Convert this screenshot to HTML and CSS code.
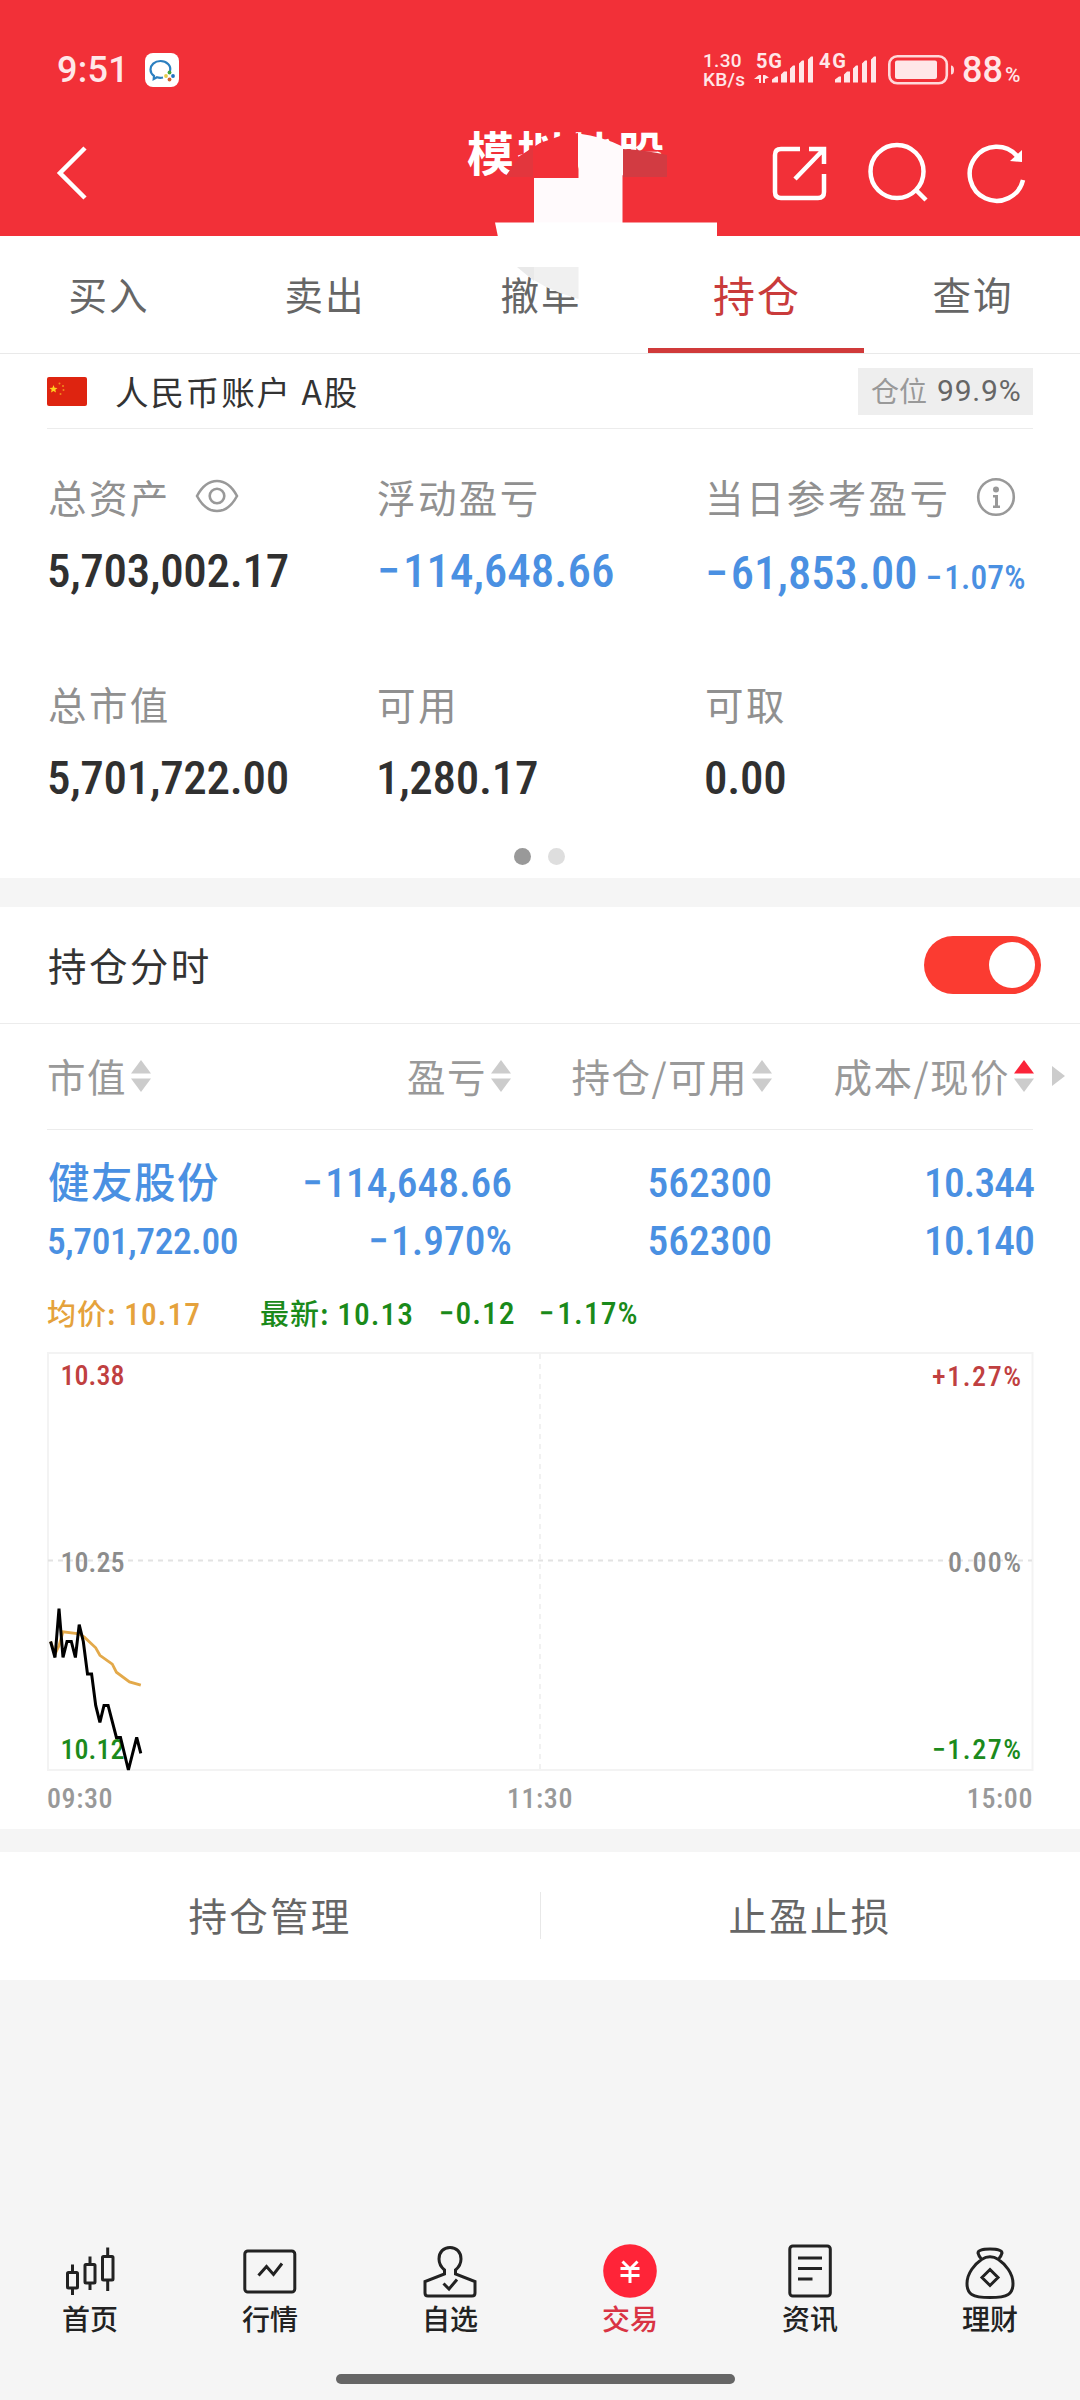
FILE: index.html
```
<!DOCTYPE html>
<html lang="zh-CN">
<head>
<meta charset="utf-8">
<title>模拟炒股</title>
<link rel="stylesheet" href="styles.css">
</head>
<body>
<div class="app">
  <header class="top">
    <div class="status">
      <span class="clock">9:51</span>
      <svg class="wecom" width="34" height="34" viewBox="0 0 34 34">
        <rect width="34" height="34" rx="8" fill="#fff"/>
        <path d="M25 18c1.500-5.500-3.500-10-9.500-10S5.500 12 5.500 16.500c0 3 1.500 5 3.500 6.500l-.3 3 3.300-1.700c2 .6 4 .6 6 .2" fill="none" stroke="#2b7fc0" stroke-width="2.200"/>
        <circle cx="24.500" cy="19.500" r="1.900" fill="#3fa43c"/><circle cx="28" cy="23" r="1.900" fill="#2272c3"/><circle cx="24.500" cy="26.500" r="1.900" fill="#d0652f"/><circle cx="21" cy="23" r="1.900" fill="#e6cc4c"/>
      </svg>
      <span class="speed"><span>1.30</span><span>KB/s</span></span>
      <svg class="signals" width="121" height="30" viewBox="0 0 121 30">
        <text class="gen" x="1" y="14.500" textLength="26">5G</text>
        <text class="gen" x="64" y="14.500" textLength="27">4G</text>
        <g fill="#ffe7e8">
          <path d="M4 22l-5 4h5v4h2v-8zM8 22v8h2v-4l4-1.500-4-2.500z"/>
          <path d="M17 29.500v-3l4-3h2v6zM26 29.500v-8l3-3h3v11zM35 29.500v-14l3-3h2v17zM44 29.500v-19l3-3h2v22zM53 29.500v-23l3-3h2v26z"/>
          <path d="M80 29.500v-3l4-3h2v6zM89 29.500v-8l3-3h3v11zM98 29.500v-14l3-3h2v17zM107 29.500v-19l3-3h2v22zM116 29.500v-23l3-3h2v26z"/>
        </g>
      </svg>
      <svg class="battery" width="67" height="30" viewBox="0 0 67 30">
        <rect x="1.300" y="1.300" width="57.500" height="27" rx="8" fill="none" stroke="#ffd9da" stroke-width="2.600"/>
        <rect x="7" y="5.500" width="42" height="18.500" rx="2" fill="#ffe7e8"/>
        <path d="M63 10.500q3 0 3 4.500t-3 4.500z" fill="#ffd9da"/>
      </svg>
      <span class="level">88<small>%</small></span>
    </div>
    <div class="titlebar">
      <svg class="back" width="40" height="60" viewBox="0 0 40 60"><path d="M34 5L9 30l25 25" fill="none" stroke="#fff" stroke-width="4.500"/></svg>
      <h1>模拟炒股</h1>
      <div class="actions">
        <svg width="60" height="60" viewBox="0 0 60 60" fill="none" stroke="#fff" stroke-width="4.500">
          <path d="M30 6H11q-6 0-6 6v37q0 6 6 6h37q6 0 6-6V31M39 6h15v15M54 6L25 36"/></svg>
        <svg width="60" height="60" viewBox="0 0 60 60" fill="none" stroke="#fff" stroke-width="4.500">
          <circle cx="29" cy="28.500" r="26.500"/><path d="M47 46l11 11"/></svg>
        <svg width="60" height="60" viewBox="0 0 60 60">
          <path d="M57 37A27 27 0 1 1 51 13" fill="none" stroke="#fff" stroke-width="4.500"/><path d="M56 7v12l-12-1z" fill="#fff"/></svg>
      </div>
    </div>
    <svg class="cover" width="230" height="180" viewBox="490 125 230 180">
      <path d="M514 177V162L518 157 540 143 560 136 578 133V178H514z" fill="#f23038"/>
      <path d="M505 177L518 159 533 147V177z" fill="#e3363d"/>
      <path d="M623 149q22 1 44 6v22h-44z" fill="#d23b42"/>
      <path d="M578.500 133.500q24 3 44 13V223H534v-45h44.500z" fill="#fffafc"/>
      <path d="M495 222.500h222V237H498z" fill="#fff"/>
      <path d="M517 267h17v14z" fill="#e9e9e9"/>
      <path d="M534 267h44.500v32L560 293 546 287 534 280z" fill="#f0f0f0"/>
    </svg>
  </header>

  <nav class="tabs">
    <a>买入</a><a>卖出</a><a>撤单</a><a class="on">持仓</a><a>查询</a>
  </nav>

  <section class="account">
    <div class="acct-row">
      <svg width="40" height="29" viewBox="0 0 40 29"><rect width="40" height="29" rx="2" fill="#de2410"/>
        <path d="M6.500 8l1.100 2.700 2.900.2-2.200 1.900.7 2.800-2.500-1.500-2.500 1.500.7-2.800-2.200-1.900 2.900-.2z" fill="#ffd21e"/>
        <g fill="#f08a1c"><circle cx="12.500" cy="6.500" r="1"/><circle cx="16" cy="9" r="1"/><circle cx="16.500" cy="13" r="1"/><circle cx="13.500" cy="17" r="1"/></g></svg>
      <span class="acct-name">人民币账户 A股</span>
      <span class="ratio">仓位 <b>99.9%</b></span>
    </div>
    <div class="metrics">
      <div class="metric">
        <div class="label">总资产
          <svg class="eye" width="44" height="34" viewBox="0 0 44 34" fill="none" stroke="#999" stroke-width="2.600"><path d="M2 17Q10 2 22 2t20 15Q34 32 22 32T2 17z"/><circle cx="22" cy="17" r="7.300"/></svg></div>
        <div class="value">5,703,002.17</div>
      </div>
      <div class="metric"><div class="label">浮动盈亏</div><div class="value pl down"><i class="minus">−</i>114,648.66</div></div>
      <div class="metric">
        <div class="label">当日参考盈亏
          <svg class="info" width="40" height="40" viewBox="0 0 40 40"><circle cx="20" cy="20" r="17.800" fill="none" stroke="#999" stroke-width="2.600"/><circle cx="20" cy="12.500" r="3" fill="#999"/><path d="M17 18h5v10.500h2V31h-7v-2.500h2V20.500h-2z" fill="#999"/></svg></div>
        <div class="value day down"><i class="minus">−</i>61,853.00<small><i class="minus">−</i>1.07%</small></div>
      </div>
      <div class="metric"><div class="label">总市值</div><div class="value">5,701,722.00</div></div>
      <div class="metric"><div class="label">可用</div><div class="value">1,280.17</div></div>
      <div class="metric"><div class="label">可取</div><div class="value">0.00</div></div>
    </div>
    <div class="dots"><i class="cur"></i><i></i></div>
  </section>

  <section class="holdings">
    <div class="switch-row"><span>持仓分时</span><span class="toggle"><i></i></span></div>
    <div class="thead">
      <span>市值<svg class="sort" width="20" height="32" viewBox="0 0 20 32"><path d="M10 0l10 13.500H0z"/><path d="M10 32L0 18.500h20z"/></svg></span>
      <span>盈亏<svg class="sort" width="20" height="32" viewBox="0 0 20 32"><path d="M10 0l10 13.500H0z"/><path d="M10 32L0 18.500h20z"/></svg></span>
      <span>持仓/可用<svg class="sort" width="20" height="32" viewBox="0 0 20 32"><path d="M10 0l10 13.500H0z"/><path d="M10 32L0 18.500h20z"/></svg></span>
      <span>成本/现价<svg class="sort asc" width="20" height="32" viewBox="0 0 20 32"><path d="M10 0l10 13.500H0z"/><path d="M10 32L0 18.500h20z"/></svg></span>
      <svg class="more" width="13" height="20" viewBox="0 0 13 20"><path d="M0 0l13 10L0 20z" fill="#ccc"/></svg>
    </div>
    <div class="stock">
      <b class="name">健友股份</b><span><i class="minus">−</i>114,648.66</span><span>562300</span><span class="price">10.344</span>
      <span class="mv">5,701,722.00</span><span><i class="minus">−</i>1.970%</span><span>562300</span><span class="price">10.140</span>
    </div>
    <div class="quote">
      <span class="avg">均价: <b>10.17</b></span>
      <span class="last">最新: <b>10.13</b></span><b class="chg">−0.12</b><b class="pct"><i class="minus">−</i>1.17%</b>
    </div>
    <svg class="chart" width="988" height="420" viewBox="46 1352 988 420">
      <rect x="48" y="1353" width="984.500" height="417" fill="none" stroke="#f3f3f3" stroke-width="2"/>
      <path d="M540 1354V1770" stroke="#f1f1f1" stroke-width="2" stroke-dasharray="5 5"/>
      <path d="M48 1560.500H1032" stroke="#e2e2e2" stroke-width="2" stroke-dasharray="5 5"/>
      <g class="axis">
        <text x="60.500" y="1385" textLength="64" fill="#c04040">10.38</text>
        <text x="60.500" y="1572" textLength="64" fill="#8c8c8c">10.25</text>
        <text x="60.500" y="1759" textLength="64" fill="#1c8a1c">10.12</text>
        <text x="932" y="1386" textLength="89" fill="#c04040">+1.27%</text>
        <text x="948" y="1572" textLength="73" fill="#8c8c8c">0.00%</text>
        <text x="932" y="1759" textLength="89" fill="#1c8a1c">−1.27%</text>
      </g>
      <polyline fill="none" stroke="#e3a94a" stroke-width="2.800" points="50.6,1641.5 55,1654 59,1645.7 63,1631.8 79.2,1633.9 84.4,1637.2 95.7,1647.8 99.9,1655.3 112.3,1664.2 116.4,1672.2 129.5,1681.9 140.800,1685.2"/>
      <polyline fill="none" stroke="#000" stroke-width="3" points="50.6,1641.5 55,1657.5 59,1608.6 63,1657.5 67,1641.5 71.3,1641.5 75.4,1657.5 79.2,1624.6 83.3,1641.5 87.5,1673.9 91.6,1673.9 95.7,1705.4 99.9,1722.3 104,1705.4 108.1,1705.4 116.4,1737.4 120.5,1737.4 128.4,1770 136.7,1737.4 140.8,1753.4"/>
    </svg>
    <div class="times"><span>09:30</span><span>11:30</span><span>15:00</span></div>
  </section>

  <section class="tools"><a>持仓管理</a><a>止盈止损</a></section>

  <footer class="nav">
    <a><svg width="60" height="60" viewBox="0 0 60 60"><rect x="7.500" y="32.500" width="10" height="15.500" rx="1"/><path d="M12.500 24.500v8M12.500 48v7M30 16.500v8M30 43v7M47.700 7.500v9M47.700 40v11"/><rect x="25" y="24.500" width="10" height="18.500" rx="1"/><rect x="42.500" y="16.500" width="10.500" height="23.500" rx="1"/></svg>首页</a>
    <a><svg width="60" height="60" viewBox="0 0 60 60"><rect x="4.800" y="11" width="50" height="41" rx="3"/><path d="M18.500 35.500l8-9 7 8 8.500-11"/></svg>行情</a>
    <a><svg width="60" height="60" viewBox="0 0 60 60"><path d="M24.500 30v4L5 41.500V53q0 3 3 3h44q3 0 3-3V41.500L35.500 34v-4C39 27 41 24 41 19 41 12 36.500 7.500 30 7.500S19 12 19 19c0 5 2 8 5.500 11zM23.500 43.500l5.500 5.500 8-9.500"/></svg>自选</a>
    <a class="on"><svg width="60" height="60" viewBox="0 0 60 60"><ellipse cx="30" cy="31" rx="26.800" ry="26.800"/><path d="M22.500 21.500l7.500 7.500 7.500-7.500M20.500 28.500h19M20.500 35.500h19M30 28v15"/></svg>交易</a>
    <a><svg width="60" height="60" viewBox="0 0 60 60"><rect x="9.800" y="6" width="40.500" height="50" rx="3"/><path d="M18 18h24M18 28.500h24M18 39h14.500"/></svg>资讯</a>
    <a><svg width="60" height="60" viewBox="0 0 60 60"><path d="M21.500 19.500C15 24 7 33 7 43.500 7 54 12 57.500 30 57.500S53 54 53 43.500C53 33 45 24 38.500 19.500 33 16 27 16 21.500 19.500zM21 18.500q-2-2-3-5.500 0-4 12-4t12 4q-1 3.500-3 5.500M30 29.500l8 8-8 8-8-8z"/></svg>理财</a>
  </footer>
  <div class="home-bar"></div>
</div>
</body>
</html>
```
FILE: styles.css
```
* { box-sizing: border-box; }
body { margin: 0; background: #f5f5f5; font-family: "Noto Sans CJK SC", sans-serif; color: #333; }
.app { width: 1080px; height: 2400px; display: flex; flex-direction: column; }
svg { display: block; flex: none; overflow: visible; }

.top { height: 236px; background: #f23038; position: relative; color: #fff; }
.status { height: 140px; padding: 0 58px 0 57px; display: flex; align-items: center; font-family: Roboto, sans-serif; color: #ffe7e8; }
.clock { font-size: 36px; letter-spacing: .3px; width: 88px; font-weight: 500; }
.speed { margin-left: 524px; width: 52px; display: flex; flex-direction: column; font-size: 19px; line-height: 19px; letter-spacing: .3px; font-weight: 500; }
.signals { margin-bottom: 4px; }
.gen { font: 700 20px Roboto, sans-serif; fill: #ffe7e8; }
.battery { margin-left: 12px; }
.level { margin-left: 7px; font-size: 36px; font-weight: 500; white-space: nowrap; }
.level small { font-size: 21px; margin-left: 2px; }
.titlebar { height: 66px; display: flex; align-items: center; padding: 0 54px 0 51px; }
.titlebar h1 { margin: -45px 0 0 376px; font-size: 47px; line-height: 60px; font-weight: 700; letter-spacing: 3.200px; white-space: nowrap; }
.actions { display: flex; gap: 38px; margin-left: auto; }
.cover { position: absolute; left: 490px; top: 125px; }

.tabs { height: 118px; display: grid; grid-template-columns: repeat(5, 1fr); background: #fff; border-bottom: 1px solid #e9e9e9; }
.tabs a { display: flex; align-items: center; justify-content: center; padding: 0 0 3px 2px; font-size: 38.500px; letter-spacing: 2px; color: #666; }
.tabs .on { font-size: 42px; color: #c93b3b; box-shadow: inset 0 -5px #d03a3a; }

.account { height: 524px; background: #fff; padding: 0 47px; }
.acct-row { height: 75px; display: flex; align-items: center; border-bottom: 1px solid #ececec; }
.acct-name { margin: -2px 0 0 28px; font-size: 33.500px; letter-spacing: 1.900px; flex: 1; }
.ratio { height: 47px; width: 175px; background: #eee; display: flex; align-items: center; padding: 0 0 2px 13px; gap: 10px; font-size: 28px; color: #999; white-space: nowrap; }
.ratio b { font: 400 30px Roboto, sans-serif; letter-spacing: .8px; color: #666; }
.metrics { display: grid; grid-template-columns: 329px 328px 1fr; grid-template-rows: 207px 200px; padding: 37px 0 0 1px; }
.label { height: 60px; display: flex; align-items: center; font-size: 38.500px; letter-spacing: 2.400px; color: #909090; white-space: nowrap; }
.eye { margin-left: 24px; }
.info { margin: 2px 0 0 26px; }
.value { margin-left: -1px; padding-top: 3px; font: 470 47px/84px "Roboto Condensed", sans-serif; letter-spacing: -.3px; color: #303030; white-space: nowrap; }
.pl { margin-left: 0; letter-spacing: 0; }
.minus { font-style: normal; display: inline-block; margin-right: .06em; }
.down { color: #4a90e2; }
.day { font-size: 46.500px; line-height: 88px; letter-spacing: .1px; margin-left: 0; }
.day small { font-size: 33.500px; margin-left: 8px; }
.dots { display: flex; justify-content: center; gap: 17px; margin: -25px 2px 0 0; }
.dots i { width: 17px; height: 17px; border-radius: 50%; background: #dedede; }
.dots .cur { background: #999; }

.holdings { margin-top: 29px; height: 922px; background: #fff; }
.switch-row { height: 117px; padding: 0 39px 0 48px; border-bottom: 1px solid #ececec; display: flex; align-items: center; justify-content: space-between; font-size: 38.500px; letter-spacing: 2.400px; }
.switch-row span:first-child { margin-top: -3px; }
.toggle { width: 117px; height: 58px; border-radius: 29px; background: #fb3b31; padding: 6px; display: flex; justify-content: flex-end; }
.toggle i { width: 46px; height: 46px; border-radius: 50%; background: #fff; }
.thead { height: 106px; padding-bottom: 4px; margin: 0 15px 0 47px; display: grid; grid-template-columns: 204px 260px 261px 262px 1fr; align-items: center; font-size: 38.500px; letter-spacing: 1.500px; color: #999; background: linear-gradient(#ececec, #ececec) 0 100% / 986px 1px no-repeat; }
.thead span { display: flex; align-items: center; justify-content: flex-end; white-space: nowrap; }
.thead span:first-child { justify-content: flex-start; }
.sort { fill: #ccc; margin: 1px 0 0 4px; }
.asc path:first-child { fill: #fb2439; }
.more { justify-self: end; margin-top: 1px; }
.stock { margin: 23px 47px 0 48px; display: grid; grid-template-columns: 204px 260px 260px 262px; grid-template-rows: 58px 58px; align-items: center; text-align: right; font: 470 41.500px "Roboto Condensed", sans-serif; color: #4a90e2; }
.stock .name { font: 500 41.500px/54px "Noto Sans CJK SC", sans-serif; letter-spacing: 1.500px; text-align: left; margin-top: -4px; }
.stock .mv { font-size: 37.500px; letter-spacing: -.4px; text-align: left; padding-top: 1px; margin-left: -1px; }
.stock .price { letter-spacing: -.9px; }
.quote { height: 60px; margin: 13px 0 2px 47px; display: flex; align-items: center; font-size: 29px; font-weight: 500; letter-spacing: 1px; white-space: nowrap; }
.quote b { font: 470 31.500px "Roboto Condensed", sans-serif; }
.avg { color: #e5a23c; width: 213px; }
.last { width: 179px; }
.last, .chg, .pct { color: #1a8a1a; }
.quote .chg, .quote .pct { padding-top: 2px; }
.quote .chg { width: 100px; }
.chart { margin: 10px 0 0 46px; }
.axis { font: 470 28px "Roboto Condensed", sans-serif; }
.times { margin: 10px 47px 0; display: flex; justify-content: space-between; font: 470 28px/34px "Roboto Condensed", sans-serif; letter-spacing: .6px; color: #999; }

.tools { margin-top: 23px; height: 128px; background: linear-gradient(#e8e8e8, #e8e8e8) 540px 40px / 1px 47px no-repeat #fff; display: grid; grid-template-columns: 1fr 1fr; }
.tools a { display: flex; align-items: center; justify-content: center; padding-bottom: 4px; font-size: 38.500px; letter-spacing: 2.300px; color: #666; }

.nav { margin-top: 260px; height: 134px; display: grid; grid-template-columns: repeat(6, 1fr); }
.nav a { display: flex; flex-direction: column; align-items: center; font-size: 28px; line-height: 36px; font-weight: 500; color: #222; }
.nav svg { fill: none; stroke: #222; stroke-width: 3; }
.nav .on { color: #d93444; }
.nav .on ellipse { fill: #ff2438; stroke: none; }
.nav .on path { stroke: #fff; }
.home-bar { align-self: center; width: 399px; height: 10px; border-radius: 5px; background: #666; margin-right: 9px; }
```
